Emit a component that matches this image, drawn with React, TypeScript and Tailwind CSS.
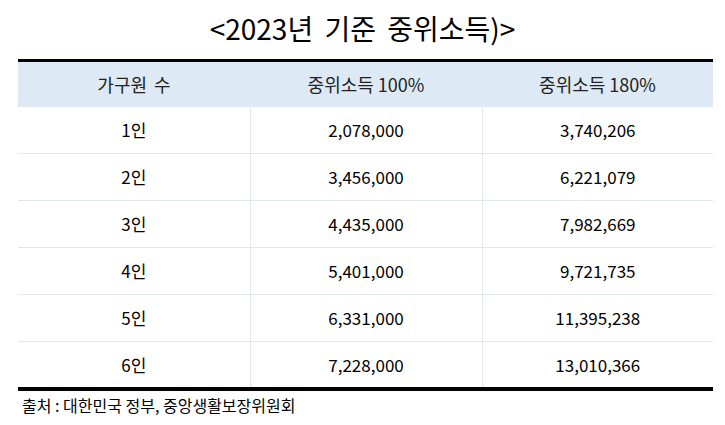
const rows = [
  ["1인", "2,078,000", "3,740,206"],
  ["2인", "3,456,000", "6,221,079"],
  ["3인", "4,435,000", "7,982,669"],
  ["4인", "5,401,000", "9,721,735"],
  ["5인", "6,331,000", "11,395,238"],
  ["6인", "7,228,000", "13,010,366"],
];

export default function App() {
  return (
    <div className="w-[725px] h-[425px] bg-white text-black font-['Noto_Sans_CJK_KR','Noto_Sans',sans-serif]">
      <h1 className="pt-[8px] h-[59px] text-center text-[28px] leading-[40px] [word-spacing:5px]">
        &lt;2023년 기준 중위소득)&gt;
      </h1>
      <div className="ml-[18px] w-[695px]">
        <table className="w-full border-collapse table-fixed border-t-[3px] border-b-[4px] border-black">
          <thead>
            <tr className="bg-[#dde9f5] h-[46px] text-[18px] text-[#222]">
              <th className="font-normal w-[232px] [word-spacing:3px]">가구원 수</th>
              <th className="font-normal w-[232px]">중위소득 100%</th>
              <th className="font-normal">중위소득 180%</th>
            </tr>
          </thead>
          <tbody>
            {rows.map((r, i) => (
              <tr key={i} className={"h-[47px] text-[17px] " + (i < rows.length - 1 ? "border-b border-[#dfe7ef]" : "")}>
                <td className="text-center">{r[0]}</td>
                <td className="text-center border-l border-[#dfe7ef]">{r[1]}</td>
                <td className="text-center border-l border-[#dfe7ef]">{r[2]}</td>
              </tr>
            ))}
          </tbody>
        </table>
        <p className="mt-[2px] pl-[4px] text-[16px] leading-[24px]">출처 : 대한민국 정부, 중앙생활보장위원회</p>
      </div>
    </div>
  );
}
